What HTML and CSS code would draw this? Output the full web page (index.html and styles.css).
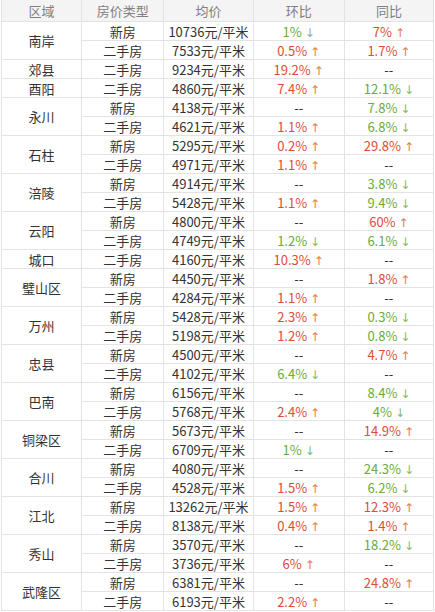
FILE: index.html
```html
<!DOCTYPE html>
<html lang="zh">
<head>
<meta charset="utf-8">
<link rel="stylesheet" href="styles.css">
</head>
<body>
<table class="price-table">
<colgroup>
<col class="c1"><col class="c2"><col class="c3"><col class="c4"><col class="c5">
</colgroup>
<thead>
<tr><th>区域</th><th>房价类型</th><th>均价</th><th>环比</th><th>同比</th></tr>
</thead>
<tbody>
<tr><td rowspan="2">南岸</td><td>新房</td><td>10736元/平米</td><td class="dn">1% <span class="ar">↓</span></td><td class="up">7% <span class="ar">↑</span></td></tr>
<tr><td>二手房</td><td>7533元/平米</td><td class="up">0.5% <span class="ar">↑</span></td><td class="up">1.7% <span class="ar">↑</span></td></tr>
<tr><td>郊县</td><td>二手房</td><td>9234元/平米</td><td class="up">19.2% <span class="ar">↑</span></td><td>--</td></tr>
<tr><td>酉阳</td><td>二手房</td><td>4860元/平米</td><td class="up">7.4% <span class="ar">↑</span></td><td class="dn">12.1% <span class="ar">↓</span></td></tr>
<tr><td rowspan="2">永川</td><td>新房</td><td>4138元/平米</td><td>--</td><td class="dn">7.8% <span class="ar">↓</span></td></tr>
<tr><td>二手房</td><td>4621元/平米</td><td class="up">1.1% <span class="ar">↑</span></td><td class="dn">6.8% <span class="ar">↓</span></td></tr>
<tr><td rowspan="2">石柱</td><td>新房</td><td>5295元/平米</td><td class="up">0.2% <span class="ar">↑</span></td><td class="up">29.8% <span class="ar">↑</span></td></tr>
<tr><td>二手房</td><td>4971元/平米</td><td class="up">1.1% <span class="ar">↑</span></td><td>--</td></tr>
<tr><td rowspan="2">涪陵</td><td>新房</td><td>4914元/平米</td><td>--</td><td class="dn">3.8% <span class="ar">↓</span></td></tr>
<tr><td>二手房</td><td>5428元/平米</td><td class="up">1.1% <span class="ar">↑</span></td><td class="dn">9.4% <span class="ar">↓</span></td></tr>
<tr><td rowspan="2">云阳</td><td>新房</td><td>4800元/平米</td><td>--</td><td class="up">60% <span class="ar">↑</span></td></tr>
<tr><td>二手房</td><td>4749元/平米</td><td class="dn">1.2% <span class="ar">↓</span></td><td class="dn">6.1% <span class="ar">↓</span></td></tr>
<tr><td>城口</td><td>二手房</td><td>4160元/平米</td><td class="up">10.3% <span class="ar">↑</span></td><td>--</td></tr>
<tr><td rowspan="2">璧山区</td><td>新房</td><td>4450元/平米</td><td>--</td><td class="up">1.8% <span class="ar">↑</span></td></tr>
<tr><td>二手房</td><td>4284元/平米</td><td class="up">1.1% <span class="ar">↑</span></td><td>--</td></tr>
<tr><td rowspan="2">万州</td><td>新房</td><td>5428元/平米</td><td class="up">2.3% <span class="ar">↑</span></td><td class="dn">0.3% <span class="ar">↓</span></td></tr>
<tr><td>二手房</td><td>5198元/平米</td><td class="up">1.2% <span class="ar">↑</span></td><td class="dn">0.8% <span class="ar">↓</span></td></tr>
<tr><td rowspan="2">忠县</td><td>新房</td><td>4500元/平米</td><td>--</td><td class="up">4.7% <span class="ar">↑</span></td></tr>
<tr><td>二手房</td><td>4102元/平米</td><td class="dn">6.4% <span class="ar">↓</span></td><td>--</td></tr>
<tr><td rowspan="2">巴南</td><td>新房</td><td>6156元/平米</td><td>--</td><td class="dn">8.4% <span class="ar">↓</span></td></tr>
<tr><td>二手房</td><td>5768元/平米</td><td class="up">2.4% <span class="ar">↑</span></td><td class="dn">4% <span class="ar">↓</span></td></tr>
<tr><td rowspan="2">铜梁区</td><td>新房</td><td>5673元/平米</td><td>--</td><td class="up">14.9% <span class="ar">↑</span></td></tr>
<tr><td>二手房</td><td>6709元/平米</td><td class="dn">1% <span class="ar">↓</span></td><td>--</td></tr>
<tr><td rowspan="2">合川</td><td>新房</td><td>4080元/平米</td><td>--</td><td class="dn">24.3% <span class="ar">↓</span></td></tr>
<tr><td>二手房</td><td>4528元/平米</td><td class="up">1.5% <span class="ar">↑</span></td><td class="dn">6.2% <span class="ar">↓</span></td></tr>
<tr><td rowspan="2">江北</td><td>新房</td><td>13262元/平米</td><td class="up">1.5% <span class="ar">↑</span></td><td class="up">12.3% <span class="ar">↑</span></td></tr>
<tr><td>二手房</td><td>8138元/平米</td><td class="up">0.4% <span class="ar">↑</span></td><td class="up">1.4% <span class="ar">↑</span></td></tr>
<tr><td rowspan="2">秀山</td><td>新房</td><td>3570元/平米</td><td>--</td><td class="dn">18.2% <span class="ar">↓</span></td></tr>
<tr><td>二手房</td><td>3736元/平米</td><td class="up">6% <span class="ar">↑</span></td><td>--</td></tr>
<tr><td rowspan="2">武隆区</td><td>新房</td><td>6381元/平米</td><td>--</td><td class="up">24.8% <span class="ar">↑</span></td></tr>
<tr><td>二手房</td><td>6193元/平米</td><td class="up">2.2% <span class="ar">↑</span></td><td>--</td></tr>
</tbody>
</table>
</body>
</html>
```
FILE: styles.css
```css
html, body {
  margin: 0;
  padding: 0;
  background: #ffffff;
}
body {
  font-family: "Noto Sans CJK SC", "Microsoft YaHei", sans-serif;
  font-size: 13px;
  color: #333333;
}
.price-table {
  border-collapse: collapse;
  table-layout: fixed;
  width: 433px;
  margin-left: 1px;
}
.c1 { width: 80px; }
.c2 { width: 82px; }
.c3 { width: 89px; }
.c4 { width: 91px; }
.c5 { width: 89px; }
.price-table th,
.price-table td {
  border: 1px solid #e3e3e3;
  padding: 0;
  text-align: center;
  vertical-align: middle;
  white-space: nowrap;
  line-height: 15px;
}
.price-table th {
  height: 21px;
  background: #f4f4f4;
  color: #808080;
  font-weight: normal;
  border-top: none;
}
.price-table td {
  height: 18px;
}
.up { color: #dd4b39; }
.up .ar { color: #ec7a4c; }
.dn { color: #6aab3a; }
.dn .ar { color: #86bb62; }
.ar {
  font-family: "DejaVu Sans", sans-serif;
  font-size: 12px;
  line-height: 10px;
}
```
